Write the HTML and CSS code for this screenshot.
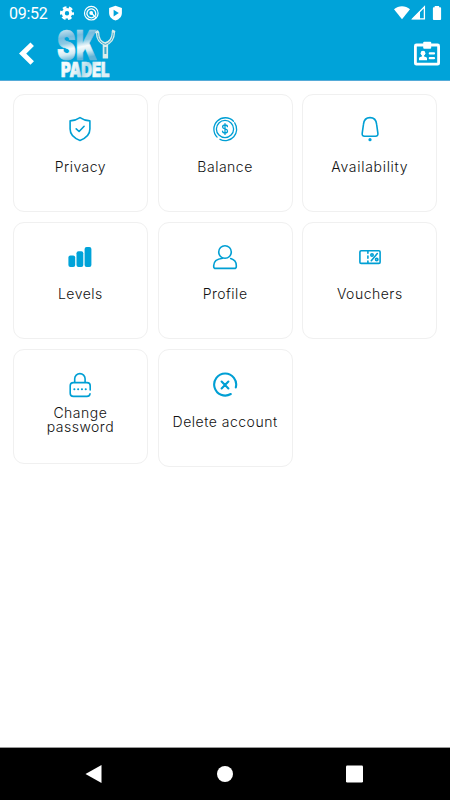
FILE: index.html
```html
<!DOCTYPE html>
<html lang="en">
<head>
    <meta charset="UTF-8">
    <meta name="viewport" content="width=device-width, initial-scale=1.0">
    <title>Sky Padel</title>
    <link rel="stylesheet" href="styles.css">
</head>
<body>
    <header class="header">
        <div class="status-bar">
            <span class="time">09:52</span>
            <svg class="status-left" width="66" height="18" viewBox="58 4 66 18">
                <circle cx="67" cy="13.2" r="3.7" fill="none" stroke="#fff" stroke-width="3"/>
                <circle cx="67" cy="13.2" r="5.8" fill="none" stroke="#fff" stroke-width="2.4" stroke-dasharray="3.6 2.47" stroke-dashoffset="1.8"/>
                <circle cx="91.3" cy="13.2" r="6.8" fill="none" stroke="#fff" stroke-width="1.2"/>
                <path d="M94.3 16.6A4.4 4.4 0 1 1 95.7 13.2V15.8M91 12.8l5.2 5" fill="none" stroke="#fff" stroke-width="1.3"/>
                <circle cx="91.2" cy="13" r="1.9" fill="#fff"/>
                <path d="M115.5 5.8l6.4 2.3v4.8c0 3.5-2.7 6.4-6.4 7.6-3.7-1.2-6.4-4.1-6.4-7.6V8.1z" fill="#fff"/>
                <path d="M113.6 9.8v6.6l5.2-3.3z" fill="#00a3d9"/>
            </svg>
            <svg class="status-right" width="50" height="18" viewBox="393 4 50 18">
                <path d="M394 9.2c4.6-4.1 11.4-4.1 16 0l-8 10z" fill="#fff"/>
                <path d="M412.7 18.8L424.4 6.9v11.9z" fill="none" stroke="#fff" stroke-width="1.3"/>
                <path d="M412 19.3l8-8.2v8.2z" fill="#fff"/>
                <path d="M434.7 6h4.4v1.3h1.1q.9 0 .9.9v10.9q0 .9-.9.9h-6.4q-.9 0-.9-.9V8.2q0-.9.9-.9h.9z" fill="#fff"/>
            </svg>
        </div>
        <div class="app-bar">
            <svg class="back" width="18" height="24" viewBox="18 42 18 24">
                <path d="M32.2 44.2L22.6 53.6l9.6 9.4" fill="none" stroke="#fff" stroke-width="5"/>
            </svg>
            <svg class="logo" width="64" height="52" viewBox="55 28 64 52">
                <defs>
                    <linearGradient id="sky" x1="0" y1="0" x2=".15" y2="1">
                        <stop offset=".2" stop-color="#d0e8f2"/>
                        <stop offset=".38" stop-color="#78bcdd"/>
                        <stop offset=".5" stop-color="#8ccae4"/>
                        <stop offset=".62" stop-color="#f6fbfc"/>
                        <stop offset=".72" stop-color="#d4ebf3"/>
                        <stop offset=".85" stop-color="#62b3d6"/>
                    </linearGradient>
                    <linearGradient id="cloud" x1="0" y1="0" x2="1" y2=".3">
                        <stop offset="0" stop-color="#fff"/>
                        <stop offset=".4" stop-color="#e9f5f8"/>
                        <stop offset=".6" stop-color="#b4dcea"/>
                        <stop offset=".8" stop-color="#f6fcfc"/>
                        <stop offset="1" stop-color="#dceff5"/>
                    </linearGradient>
                </defs>
                <text class="logo-text" x="57" y="59.6" font-size="41" textLength="40" lengthAdjust="spacingAndGlyphs" fill="url(#sky)" stroke="url(#sky)">SK</text>
                <text class="logo-text" x="61" y="77" font-size="20.5" textLength="48.5" lengthAdjust="spacingAndGlyphs" fill="url(#cloud)" stroke="url(#cloud)">PADEL</text>
                <g fill="none" stroke="#d9ecea">
                    <path d="M97.5 32c0 8 3 10.5 7.8 12 5-1.5 8-5 8.2-12.5" stroke-width="3.4"/>
                    <path d="M105.4 44v14.5" stroke-width="5.4"/>
                    <path d="M97.6 33c.3 7 3.2 9.7 7.8 11.4 4.6-1.7 7.5-5 7.9-12" stroke="#40aacb" stroke-width="1"/>
                    <path d="M105.4 47v7" stroke="#40aacb" stroke-width="2"/>
                    <path d="M95.5 33l3-2M112 30.5l3 1.5" stroke-width="2.2"/>
                </g>
            </svg>
            <svg class="badge" width="28" height="26" viewBox="413 41 28 26">
                <rect x="415.4" y="45" width="23.2" height="19.2" rx="1" fill="none" stroke="#fff" stroke-width="2.8"/>
                <rect x="423.2" y="41.7" width="8" height="7" rx="1" fill="#fff"/>
                <circle cx="423" cy="53.2" r="2.4" fill="#fff"/>
                <path d="M419 60.2v-2q0-.9 1.2-1.2l1.7-.5V55h2.2v1.5l1.7.5q1.2.3 1.2 1.2v2z" fill="#fff"/>
                <path d="M429.8 53.4h4.2M429.8 58.2h4.2" stroke="#fff" stroke-width="2.2" stroke-linecap="round"/>
            </svg>
        </div>
    </header>

    <main class="menu">
        <a class="card">
            <svg width="26" height="26" viewBox="0 0 26 26">
                <path d="M13 1.6c3 2.1 6.2 3.1 9.9 3.3v8.2c0 5.2-4.2 9.3-9.9 11.3-5.7-2-9.9-6.1-9.9-11.3V4.9C6.8 4.7 10 3.7 13 1.6z"/>
                <path d="M9.2 12.8l2.9 2.7 5-5.2"/>
            </svg>
            <span>Privacy</span>
        </a>
        <a class="card">
            <svg class="thin" width="26" height="26" viewBox="0 0 26 26">
                <path d="M5.1 21.1A11.4 11.4 0 0 1 21.5 5.2M22.7 6.8A11.4 11.4 0 0 1 8 23.3"/>
                <circle cx="13" cy="13" r="8.6"/>
                <path d="M13 7.6v10.8M15.4 10.7c0-1.1-1-1.7-2.4-1.7s-2.4.7-2.4 1.9c0 2.8 4.9 1.2 4.9 4.1 0 1.2-1 2-2.5 2s-2.5-.8-2.5-1.9"/>
            </svg>
            <span>Balance</span>
        </a>
        <a class="card">
            <svg width="26" height="26" viewBox="0 0 26 26">
                <path d="M13 1.6c4 0 6.2 2.7 6.6 6.6l1.3 9.2q.3 2.9-2.4 2.9H7.5q-2.6 0-2.3-2.9l1.3-9.2c.4-3.9 2.6-6.6 6.5-6.6z"/>
                <circle class="solid" cx="13" cy="23.7" r="1.6"/>
            </svg>
            <span class="availability">Availability</span>
        </a>

        <a class="card">
            <svg width="26" height="26" viewBox="0 0 26 26">
                <g class="solid">
                    <rect x="1.4" y="11.5" width="6.8" height="11.5" rx="2"/>
                    <rect x="9.5" y="7.2" width="6.8" height="15.8" rx="2"/>
                    <rect x="17.6" y="3" width="6.8" height="20" rx="2"/>
                </g>
            </svg>
            <span>Levels</span>
        </a>
        <a class="card">
            <svg width="26" height="26" viewBox="0 0 26 26">
                <circle cx="13" cy="8" r="6.3"/>
                <path d="M10.7 14.2C5 14.8 1.7 17.6 1.7 21.6v.8q0 2 2 2h18.6q2 0 2-2v-.8c0-3.7-1.9-5.9-5.6-7"/>
            </svg>
            <span>Profile</span>
        </a>
        <a class="card">
            <svg width="26" height="26" viewBox="0 0 26 26">
                <rect x="2.9" y="6.7" width="20.2" height="12.7" rx="1.2"/>
                <path d="M10.9 7v12" stroke-dasharray="2.2 2.8"/>
                <path d="M20.3 9.5l-6 7.2"/>
                <circle cx="15" cy="11" r="1.2"/>
                <circle cx="19.7" cy="15.6" r="1.2"/>
            </svg>
            <span>Vouchers</span>
        </a>

        <a class="card last two-line">
            <svg width="26" height="26" viewBox="0 0 26 26">
                <path d="M7.7 10.6V6.8a5.2 5.2 0 0 1 10.4 0v3.8M23.2 18v-4.2q0-3.2-3.2-3.2H6.4q-3.2 0-3.2 3.2v7.4q0 3.2 3.2 3.2H20q2.6 0 3-2.5"/>
                <path class="dots" d="M7.3 17.2h.1M11.1 17.2h.1M14.9 17.2h.1M18.7 17.2h.1"/>
            </svg>
            <span>Change<br>password</span>
        </a>
        <a class="card last">
            <svg class="bold" width="26" height="26" viewBox="0 0 26 26">
                <path d="M23.8 15.4a11 11 0 1 0-5 6.6"/>
                <path d="M9.6 9.6l6.8 6.8M16.4 9.6l-6.8 6.8"/>
            </svg>
            <span>Delete account</span>
        </a>
    </main>

    <footer class="nav-bar">
        <svg width="20" height="20" viewBox="0 0 20 20"><path d="M1.5 10L17.5 1v18z"/></svg>
        <svg width="20" height="20" viewBox="0 0 20 20"><circle cx="10" cy="10" r="8"/></svg>
        <svg width="20" height="20" viewBox="0 0 20 20"><rect x="0" y="1.5" width="17" height="17" rx="1.2"/></svg>
    </footer>
</body>
</html>
```
FILE: styles.css
```css
* {
    box-sizing: border-box;
}
body {
    margin: 0;
    height: 100vh;
    display: flex;
    flex-direction: column;
    background: #fff;
    font-family: Inter, "Open Sans", sans-serif;
    overflow: hidden;
}
svg {
    display: block;
    flex-shrink: 0;
}
.header {
    height: 81px;
    background: #00a3d9;
    border-bottom: 1px solid #55abd8;
}
.status-bar {
    height: 28px;
    padding: 4px 7px 0 9px;
    display: flex;
    color: #fff;
}
.time {
    width: 49px;
    font: 16px/20px Roboto, sans-serif;
    letter-spacing: -0.3px;
}
.status-right {
    margin-left: auto;
}
.app-bar {
    height: 52px;
    padding: 0 9px 0 18px;
    display: flex;
}
.back {
    margin-top: 14px;
}
.logo {
    margin-left: 19px;
    overflow: visible;
}
.logo-text {
    font-family: Inter, sans-serif;
    font-weight: 900;
    stroke-width: 0.7px;
}
.badge {
    margin: 13px 0 0 auto;
}
.menu {
    flex: 1;
    padding: 13px 12px 0 12.9px;
    display: grid;
    grid-template-columns: repeat(3, 135px);
    grid-auto-rows: 117.5px;
    column-gap: 9.7px;
    row-gap: 10px;
    align-content: start;
}
.card {
    border: 1.5px solid #f0f0f0;
    border-radius: 11px;
    padding-top: 21px;
    display: flex;
    flex-direction: column;
    align-items: center;
    text-align: center;
}
.card svg {
    fill: none;
    stroke: #009fd4;
    stroke-width: 1.6;
    stroke-linecap: round;
    stroke-linejoin: round;
}
.card svg.thin {
    stroke-width: 1.3;
}
.card svg.bold {
    stroke-width: 2.1;
}
.card .solid {
    fill: #00a3d9;
    stroke: none;
}
.card .dots {
    stroke-width: 2;
}
.card span {
    margin-top: 15.5px;
    font-size: 14px;
    font-weight: 300;
    line-height: 18px;
    letter-spacing: 0.5px;
    color: #111;
    white-space: nowrap;
}
.last {
    padding-top: 21.6px;
}
.last span {
    margin-top: 15px;
}
.two-line {
    height: 115px;
}
.card.two-line span {
    margin-top: 8.5px;
    line-height: 14px;
}
.card .availability {
    letter-spacing: 0.7px;
}
.nav-bar {
    height: 53px;
    padding: 0 84px;
    display: flex;
    justify-content: space-between;
    align-items: center;
    background: #000;
    border-top: 1px solid #999;
}
.nav-bar svg {
    fill: #fff;
}
```
